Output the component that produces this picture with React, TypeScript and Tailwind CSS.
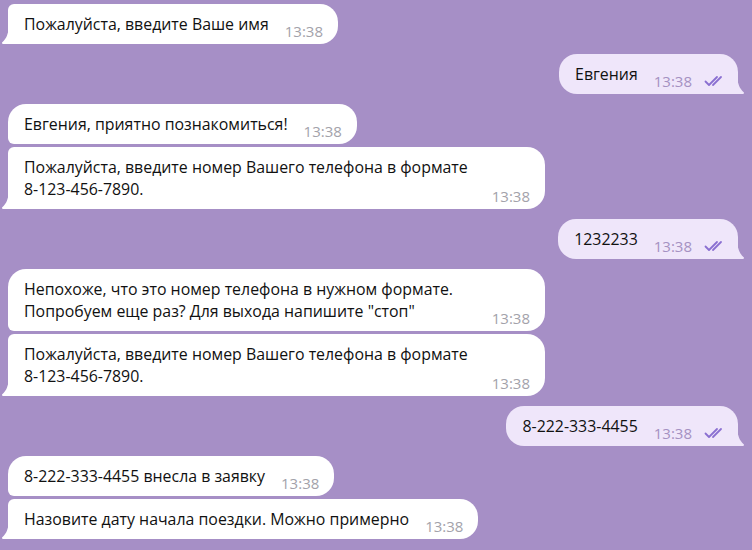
import React from 'react';

type Msg = {
  out?: boolean;
  lines: string[];
  first?: boolean;
  last?: boolean;
};

const messages: Msg[] = [
  { lines: ['Пожалуйста, введите Ваше имя'], first: false, last: true },
  { out: true, lines: ['Евгения'], first: true, last: true },
  { lines: ['Евгения, приятно познакомиться!'], first: true, last: false },
  { lines: ['Пожалуйста, введите номер Вашего телефона в формате', '8-123-456-7890.'], first: false, last: true },
  { out: true, lines: ['1232233'], first: true, last: true },
  { lines: ['Непохоже, что это номер телефона в нужном формате.', 'Попробуем еще раз? Для выхода напишите "стоп"'], first: true, last: false },
  { lines: ['Пожалуйста, введите номер Вашего телефона в формате', '8-123-456-7890.'], first: false, last: true },
  { out: true, lines: ['8-222-333-4455'], first: true, last: true },
  { lines: ['8-222-333-4455 внесла в заявку'], first: true, last: false },
  { lines: ['Назовите дату начала поездки. Можно примерно'], first: false, last: true },
];

const ReadChecks = () => (
  <svg width="20" height="12" viewBox="0 0 20 12" fill="none" stroke="#8a6fd1" strokeWidth="1.8" strokeLinecap="round" strokeLinejoin="round">
    <path d="M1.5 6.5 L5 10 L13 2" />
    <path d="M9 10 L17 2" />
  </svg>
);

const TailIn = () => (
  <svg width="9" height="17" viewBox="0 0 9 17" className="absolute bottom-0 -left-[8px]">
    <path d="M3 17h6V0c-.193 2.84-.876 5.767-2.05 8.782-.904 2.325-2.446 4.485-4.625 6.48A1 1 0 003 17z" fill="#ffffff" />
  </svg>
);

const TailOut = () => (
  <svg width="9" height="17" viewBox="0 0 9 17" className="absolute bottom-0 -right-[8px] -scale-x-100">
    <path d="M3 17h6V0c-.193 2.84-.876 5.767-2.05 8.782-.904 2.325-2.446 4.485-4.625 6.48A1 1 0 003 17z" fill="#efe6fa" />
  </svg>
);

const Bubble: React.FC<{ m: Msg }> = ({ m }) => {
  const radius = m.out
    ? 'rounded-l-[18px] rounded-tr-[18px] rounded-br-none'
    : m.first && m.last
      ? 'rounded-r-[18px] rounded-tl-[18px] rounded-bl-none'
      : m.first
        ? 'rounded-r-[18px] rounded-tl-[18px] rounded-bl-[6px]'
        : 'rounded-r-[18px] rounded-tl-[6px] rounded-bl-none';
  const multi = m.lines.length > 1;

  return (
    <div className={`flex ${m.out ? 'justify-end pr-[14px]' : 'justify-start pl-[8px]'}`}>
      <div
        className={`relative flex items-end justify-between ${multi ? 'w-[537px]' : ''} ${radius} ${
          m.out ? 'bg-[#efe6fa] pl-[16px] pr-[14px]' : 'bg-white pl-[16px] pr-[15px]'
        } pt-[9px] pb-[9px]`}
      >
        <div className="text-[15.9px] leading-[22px] text-[#111]">
          {m.lines.map((l, i) => (
            <div key={i} className="whitespace-nowrap">{l}</div>
          ))}
        </div>
        <div className="flex items-center gap-[12px] ml-[16px] translate-y-[4px]">
          <span className={`text-[15px] leading-[16px] ${m.out ? 'text-[#a591c2]' : 'text-[#a3a2aa]'}`}>13:38</span>
          {m.out && <ReadChecks />}
        </div>
        {m.last && (m.out ? <TailOut /> : <TailIn />)}
      </div>
    </div>
  );
};

const App: React.FC = () => {
  return (
    <div
      className="w-[752px] h-[550px] overflow-hidden bg-[#a68fc6] pt-[4px]"
      style={{ fontFamily: '"Open Sans", "Noto Sans", sans-serif' }}
    >
      <div className="flex flex-col">
        {messages.map((m, i) => (
          <div key={i} className={i === 0 ? '' : m.first ? 'mt-[10px]' : 'mt-[3px]'}>
            <Bubble m={m} />
          </div>
        ))}
      </div>
    </div>
  );
};

export default App;
